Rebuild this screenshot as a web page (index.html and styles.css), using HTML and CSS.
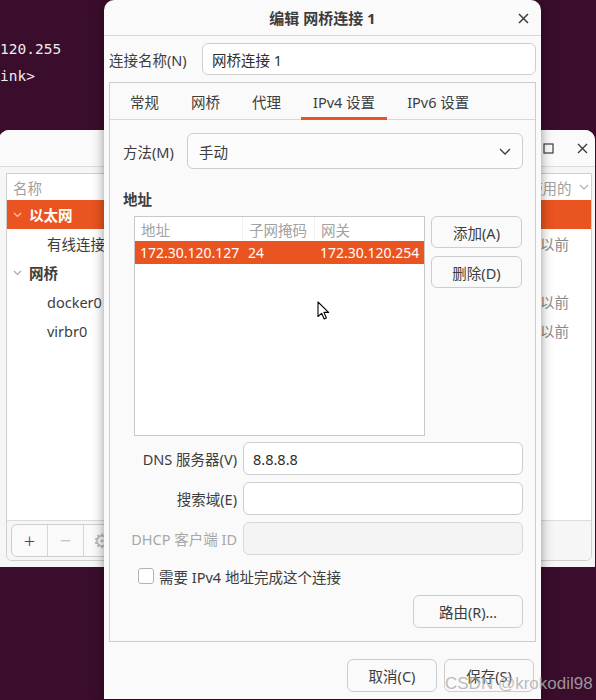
FILE: index.html
```html
<!DOCTYPE html>
<html lang="zh-CN">
<head>
<meta charset="utf-8">
<title>编辑 网桥连接 1</title>
<link rel="stylesheet" href="styles.css">
</head>
<body>
<pre class="term">120.255
ink&gt;</pre>

<div class="bgwin">
  <div class="bg-title">
    <svg class="bg-max" width="11" height="11" viewBox="0 0 11 11"><rect x="1" y="1" width="9" height="9" fill="none" stroke="#3d3d3d" stroke-width="1.2"/></svg>
    <svg class="bg-close" width="11" height="11" viewBox="0 0 11 11"><path d="M1 1L10 10M10 1L1 10" stroke="#3d3d3d" stroke-width="1.4"/></svg>
  </div>
  <div class="bg-frame">
    <div class="bg-list">
      <div class="bg-row bg-head"><span class="bg-name">名称</span><span class="bg-date">最后使用的<svg class="hchev" width="10" height="6" viewBox="0 0 10 6"><path d="M1 1L5 5L9 1" fill="none" stroke="#b0b0b0" stroke-width="1.2"/></svg></span></div>
      <div class="bg-row sel"><span class="bg-name"><svg class="chev" width="9" height="6" viewBox="0 0 9 6"><path d="M1 1L4.5 4.5L8 1" fill="none" stroke="#f7c8b4" stroke-width="1.2"/></svg><b>以太网</b></span><span class="bg-date"></span></div>
      <div class="bg-row"><span class="bg-name child">有线连接 1</span><span class="bg-date">5 小时以前</span></div>
      <div class="bg-row"><span class="bg-name"><svg class="chev" width="9" height="6" viewBox="0 0 9 6"><path d="M1 1L4.5 4.5L8 1" fill="none" stroke="#a8a8a8" stroke-width="1.2"/></svg><b>网桥</b></span><span class="bg-date"></span></div>
      <div class="bg-row"><span class="bg-name child">docker0</span><span class="bg-date">5 小时以前</span></div>
      <div class="bg-row"><span class="bg-name child">virbr0</span><span class="bg-date">5 小时以前</span></div>
    </div>
    <div class="bg-toolbar">
      <div class="tb-group">
        <span class="tb-btn">+</span>
        <span class="tb-btn dim">−</span>
        <span class="tb-btn dim">⚙</span>
      </div>
    </div>
  </div>
</div>

<div class="dialog">
  <div class="dlg-title">编辑 网桥连接 1
    <svg class="dlg-close" width="11" height="11" viewBox="0 0 11 11"><path d="M1 1L10 10M10 1L1 10" stroke="#3d3d3d" stroke-width="1.5"/></svg>
  </div>
  <div class="dlg-body">
    <div class="name-row">
      <span class="name-label">连接名称(N)</span>
      <div class="entry grow">网桥连接 1</div>
    </div>
    <div class="notebook">
      <div class="tabbar">
        <span class="tab">常规</span>
        <span class="tab">网桥</span>
        <span class="tab">代理</span>
        <span class="tab active">IPv4 设置</span>
        <span class="tab">IPv6 设置</span>
      </div>
      <div class="page">
        <div class="method-row">
          <span class="method-label">方法(M)</span>
          <div class="combo">手动
            <svg width="12" height="7" viewBox="0 0 12 7"><path d="M1 1L6 6L11 1" fill="none" stroke="#3d3d3d" stroke-width="1.3"/></svg>
          </div>
        </div>
        <div class="section-title">地址</div>
        <div class="addr-area">
          <div class="tree">
            <div class="tree-row tree-head">
              <span class="c1">地址</span><span class="c2">子网掩码</span><span class="c3">网关</span>
            </div>
            <div class="tree-row tree-sel">
              <span class="c1">172.30.120.127</span><span class="c2">24</span><span class="c3">172.30.120.254</span>
            </div>
          </div>
          <div class="addr-btns">
            <div class="btn">添加(A)</div>
            <div class="btn">删除(D)</div>
          </div>
        </div>
        <div class="form">
          <span class="flabel">DNS 服务器(V)</span><div class="entry">8.8.8.8</div>
          <span class="flabel">搜索域(E)</span><div class="entry"></div>
          <span class="flabel disabled">DHCP 客户端 ID</span><div class="entry off"></div>
        </div>
        <div class="check-row"><span class="checkbox"></span><span>需要 IPv4 地址完成这个连接</span></div>
        <div class="route-row"><div class="btn route">路由(R)…</div></div>
      </div>
    </div>
    <div class="actions">
      <div class="btn act">取消(C)</div>
      <div class="btn act">保存(S)</div>
    </div>
  </div>
</div>

<svg class="cursor" width="13" height="19" viewBox="0 0 13 19"><path d="M1 1L1 15.5L4.6 12.3L7.2 18L9.4 17L6.9 11.4L11.6 11.4Z" fill="#fff" stroke="#000" stroke-width="1.1" stroke-linejoin="round"/></svg>

<div class="watermark">CSDN @krokodil98</div>
</body>
</html>
```

FILE: styles.css
```css
* { box-sizing: border-box; }

html, body {
  margin: 0;
  padding: 0;
}

body {
  width: 596px;
  height: 700px;
  overflow: hidden;
  position: relative;
  background: #3a0d2c;
  font-family: "Noto Sans", "Noto Sans CJK SC", sans-serif;
  font-size: 14.5px;
  color: #3d3d3d;
}

/* terminal text behind */
.term {
  position: absolute;
  left: 0;
  top: 36px;
  margin: 0;
  font-family: "DejaVu Sans Mono", monospace;
  font-size: 14.5px;
  line-height: 27px;
  color: #ececec;
}

/* background window */
.bgwin {
  position: absolute;
  left: -1px;
  top: 130px;
  width: 596px;
  height: 437px;
  background: #f6f6f6;
  border-radius: 10px 10px 0 0;
  display: flex;
  flex-direction: column;
}

.bg-title {
  height: 37px;
  flex: none;
  background: #fafafa;
  border-bottom: 1px solid #dcdcdc;
  border-radius: 10px 10px 0 0;
  position: relative;
}

.bg-max { position: absolute; left: 544px; top: 13px; }
.bg-close { position: absolute; left: 578px; top: 13px; }

.bg-frame {
  margin: 6px 3px 6px 7px;
  flex: 1;
  border: 1px solid #cfcfcf;
  background: #fff;
  display: flex;
  flex-direction: column;
  border-radius: 0 0 6px 6px;
}

.bg-list { flex: 1; }

.bg-row {
  display: flex;
  align-items: center;
  height: 29px;
}

.bg-head {
  height: 26px;
  color: #a0a0a0;
}

.bg-name {
  flex: 1;
  padding-left: 6px;
  display: flex;
  align-items: center;
}

.bg-name b { font-weight: bold; }

.bg-name.child { padding-left: 40px; }

.chev { margin-right: 7px; }

.bg-date {
  width: 92px;
  color: #8a8a8a;
  display: flex;
  align-items: center;
}

.bg-head .bg-date { color: #a0a0a0; }

.hchev { margin-left: 7px; }

.bg-row.sel {
  background: #e95420;
  color: #fff;
}

.bg-toolbar {
  height: 40px;
  flex: none;
  border-top: 1px solid #dcdcdc;
  background: #f6f6f6;
  padding: 3px 4px;
  border-radius: 0 0 6px 6px;
}

.tb-group {
  display: flex;
  height: 33px;
  border: 1px solid #cfcfcf;
  border-radius: 6px;
  background: #fafafa;
  width: 200px;
}

.tb-btn {
  width: 36px;
  border-right: 1px solid #d6d6d6;
  display: flex;
  align-items: center;
  justify-content: center;
  font-size: 20px;
  font-weight: 300;
  color: #4a4a4a;
}

.tb-btn.dim { color: #b8b8b8; }

/* dialog */
.dialog {
  position: absolute;
  left: 104px;
  top: 0;
  width: 437px;
  height: 699px;
  background: #fafafa;
  border-radius: 10px 10px 0 0;
  box-shadow: 0 2px 12px rgba(0, 0, 0, 0.42);
  display: flex;
  flex-direction: column;
}

.dlg-title {
  height: 36px;
  flex: none;
  border-bottom: 1px solid #dadada;
  display: flex;
  align-items: center;
  justify-content: center;
  font-weight: bold;
  font-size: 15px;
  position: relative;
}

.dlg-close { position: absolute; left: 414px; top: 13px; }

.dlg-body {
  padding: 7px 5px 0 5px;
  display: flex;
  flex-direction: column;
}

.name-row {
  display: flex;
  align-items: center;
  height: 32px;
}

.name-label { width: 93px; }

.entry {
  height: 33px;
  border: 1px solid #cdcdcd;
  border-radius: 6px;
  background: #fff;
  padding: 0 9px;
  display: flex;
  align-items: center;
  color: #2e2e2e;
}

.name-row .entry { height: 32px; }

.grow { flex: 1; }

.entry.off { background: #f4f4f4; border-color: #d8d8d8; }

.notebook {
  margin-top: 7px;
  height: 560px;
  border: 1px solid #cdcdcd;
  display: flex;
  flex-direction: column;
}

.tabbar {
  height: 37px;
  flex: none;
  border-bottom: 1px solid #d8d8d8;
  display: flex;
  padding-left: 4px;
}

.tab {
  position: relative;
  padding: 0 12px;
  margin: 0 4px;
  display: flex;
  align-items: center;
  color: #3d3d3d;
}

.tab.active::after {
  content: "";
  position: absolute;
  left: 0;
  right: 0;
  bottom: -1px;
  height: 3px;
  background: #e95420;
}

.page {
  padding: 13px 12px 0 13px;
  display: flex;
  flex-direction: column;
}

.method-row {
  display: flex;
  align-items: center;
  height: 36px;
}

.method-label { width: 64px; }

.combo {
  flex: 1;
  height: 36px;
  border: 1px solid #cdcdcd;
  border-radius: 6px;
  background: #fcfcfc;
  display: flex;
  align-items: center;
  justify-content: space-between;
  padding: 0 11px 0 11px;
}

.section-title {
  margin-top: 20px;
  font-weight: bold;
  line-height: 20px;
}

.addr-area {
  margin-top: 7px;
  margin-left: 11px;
  display: flex;
  gap: 6px;
}

.tree {
  width: 291px;
  height: 220px;
  border: 1px solid #c8c8c8;
  background: #fff;
}

.tree-row {
  display: flex;
  height: 23px;
  align-items: center;
}

.tree-head {
  height: 24px;
  color: #a2a2a2;
}

.tree-row span {
  padding-left: 5px;
  white-space: nowrap;
  height: 100%;
  display: flex;
  align-items: center;
}

.tree-sel span { font-size: 14px; }

.tree-head span { padding-left: 6px; }

.tree-head .c1, .tree-head .c2 { border-right: 1px solid #f0f0f0; }

.c1 { width: 108px; }
.c2 { width: 72px; }
.c3 { flex: 1; }

.tree-sel {
  background: #e95420;
  color: #fff;
}

.addr-btns {
  width: 91px;
  display: flex;
  flex-direction: column;
  gap: 8px;
}

.btn {
  height: 32px;
  border: 1px solid #cdcdcd;
  border-radius: 6px;
  background: #fafafa;
  display: flex;
  align-items: center;
  justify-content: center;
  color: #3d3d3d;
}

.form {
  margin-top: 6px;
  margin-left: 11px;
  display: grid;
  grid-template-columns: 103px 1fr;
  grid-auto-rows: 33px;
  column-gap: 6px;
  row-gap: 7px;
  align-items: center;
}

.flabel { text-align: right; white-space: nowrap; display: flex; justify-content: flex-end; }
.flabel.disabled { color: #a8a8a8; }

.check-row {
  margin-top: 11px;
  margin-left: 15px;
  height: 20px;
  display: flex;
  align-items: center;
  gap: 5px;
}

.checkbox {
  width: 16px;
  height: 16px;
  border: 1px solid #b4b4b4;
  border-radius: 3px;
  background: #fff;
}

.route-row {
  margin-top: 9px;
  display: flex;
  justify-content: flex-end;
}

.btn.route { width: 110px; height: 33px; }

.actions {
  margin-top: 17px;
  padding-right: 2px;
  display: flex;
  justify-content: flex-end;
  gap: 7px;
}

.btn.act { width: 90px; height: 33px; }

.cursor {
  position: absolute;
  left: 317px;
  top: 301px;
}

.watermark {
  position: absolute;
  left: 445px;
  top: 674px;
  font-family: "Liberation Sans", "Noto Sans", sans-serif;
  font-size: 17px;
  color: rgba(175, 175, 175, 0.85);
  white-space: nowrap;
}
```
